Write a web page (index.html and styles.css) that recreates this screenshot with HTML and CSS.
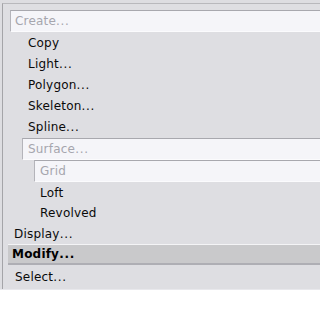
FILE: index.html
```html
<!DOCTYPE html>
<html>
<head>
<meta charset="utf-8">
<link rel="stylesheet" href="styles.css">
</head>
<body>
<div class="panel">
  <div class="frame">
    <div class="list">
      <div class="row box lvl0"><span class="t dis">Create<span class="dots">...</span></span></div>
      <div class="row lvl1"><span class="t">Copy</span></div>
      <div class="row lvl1"><span class="t">Light<span class="dots">...</span></span></div>
      <div class="row lvl1"><span class="t">Polygon<span class="dots">...</span></span></div>
      <div class="row lvl1"><span class="t">Skeleton<span class="dots">...</span></span></div>
      <div class="row lvl1"><span class="t">Spline<span class="dots">...</span></span></div>
      <div class="row box boxlvl1 surface"><span class="t dis">Surface<span class="dots">...</span></span></div>
      <div class="row box boxlvl2"><span class="t dis">Grid</span></div>
      <div class="row lvl2"><span class="t">Loft</span></div>
      <div class="row lvl2 revolved"><span class="t">Revolved</span></div>
      <div class="row lvl0b"><span class="t">Display<span class="dots">...</span></span></div>
      <div class="row sel"><span class="t">Modify<span class="dots">...</span></span></div>
      <div class="row lvl0 select"><span class="t">Select<span class="dots">...</span></span></div>
    </div>
  </div>
</div>
</body>
</html>
```

FILE: styles.css
```css
html, body {
  margin: 0;
  padding: 0;
  background: #ffffff;
}
body {
  width: 320px;
  height: 320px;
  overflow: hidden;
  font-family: "DejaVu Sans", Verdana, sans-serif;
  font-size: 12px;
  color: #0a0a0a;
}
.panel {
  height: 290px;
  background: #dddde1;
  padding-left: 2px;
  padding-top: 3px;
  box-sizing: border-box;
  border-bottom: 1px solid #e8e8ec;
}
.frame {
  height: 100%;
  border-left: 1px solid #a4a4a8;
  border-top: 1px solid #b8b8bc;
  background: #dedee2;
  padding-top: 6px;
  box-sizing: border-box;
}
.list {
  display: flex;
  flex-direction: column;
}
.row {
  height: 21px;
  display: flex;
  align-items: center;
  white-space: nowrap;
}
.t {
  letter-spacing: 0.2px;
}
.dots {
  letter-spacing: 0.7px;
}
.dis {
  color: #a6a6ae;
}
.box {
  background: #f5f5f9;
  border-top: 1px solid #a8a8ae;
  border-left: 1px solid #b4b4ba;
  border-bottom: 1px solid #fbfbfd;
  height: 20px;
}
.lvl0 {
  margin-left: 7px;
  padding-left: 4px;
}
.row.box.lvl0 {
  padding-left: 4px;
}
.lvl1 {
  padding-left: 25px;
}
.boxlvl1 {
  margin-left: 19px;
  padding-left: 5px;
}
.surface {
  margin-top: 1px;
}
.boxlvl2 {
  margin-left: 31px;
  padding-left: 5px;
}
.lvl2 {
  padding-left: 37px;
}
.revolved {
  height: 20px;
}
.lvl0b {
  padding-left: 11px;
  height: 21px;
}
.sel {
  margin-left: 5px;
  padding-left: 4px;
  background: #c9c9cb;
  border-top: 1px solid #f4f4f6;
  border-bottom: 2px solid #aeaeb4;
  height: 18px;
  font-weight: bold;
  color: #000;
}
.select {
  margin-top: 1px;
  margin-left: 0;
  padding-left: 12px;
}
```
